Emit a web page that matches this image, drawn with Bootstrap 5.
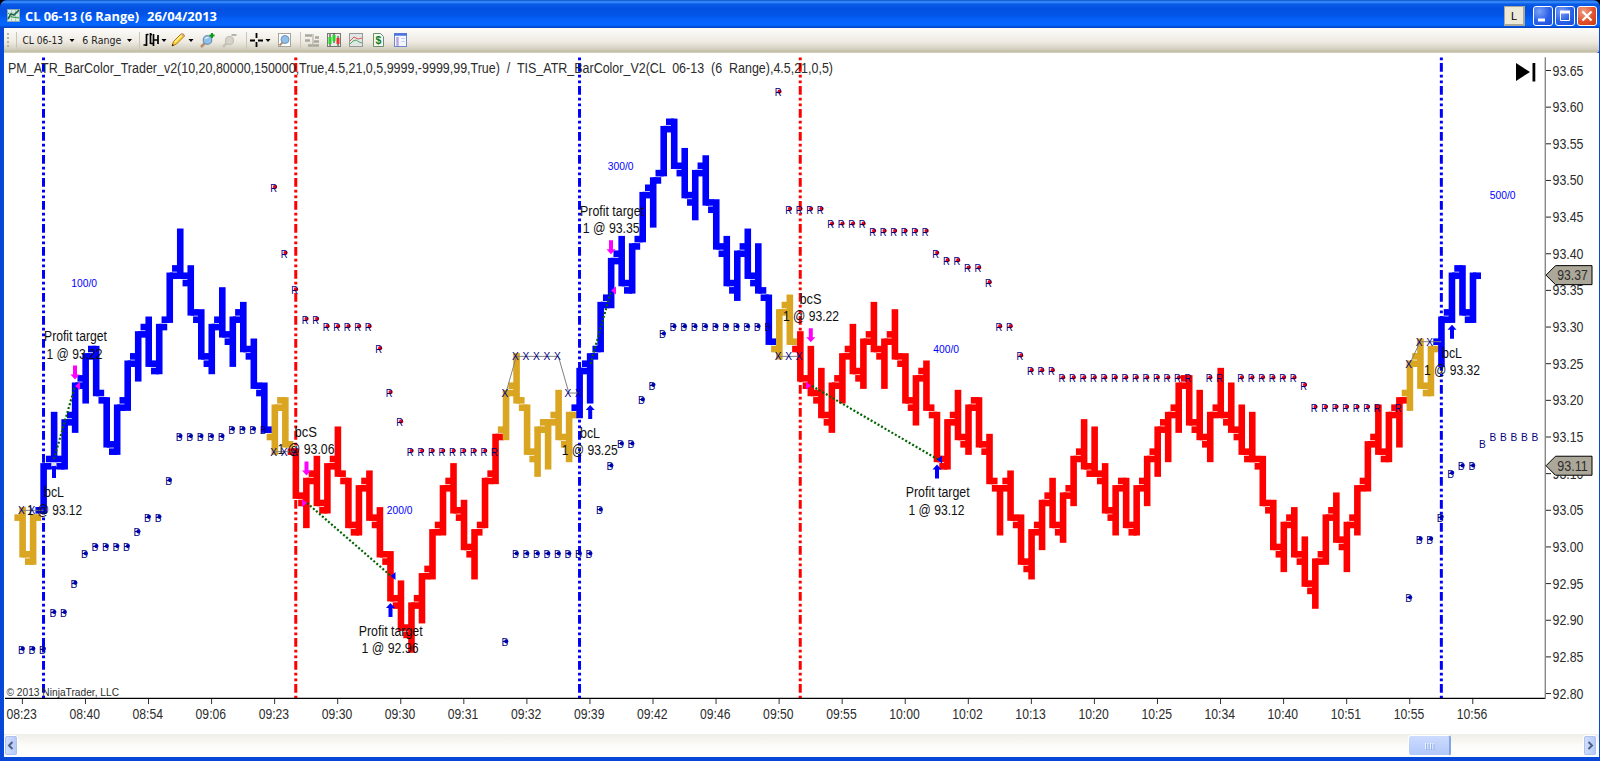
<!DOCTYPE html>
<html lang="en">
<head>
  <meta charset="UTF-8">
  <meta name="viewport" content="width=device-width, initial-scale=1">
  <title>CL 06-13 (6 Range) 26/04/2013</title>
  <link href="https://cdn.jsdelivr.net/npm/bootstrap@5.3.0/dist/css/bootstrap.min.css" rel="stylesheet">
  <style>
    body { background: #000; font-family: "Liberation Sans", sans-serif; color: #000; }
    .app-window { height: 761px; background: #0848d8; border-radius: 7px 7px 0 0; padding: 0 1px 4px 4px; }
    .title-bar { height: 28px; margin: 0 -1px 0 -4px; padding: 3px 3px 0 6px; border-radius: 7px 7px 0 0;
      background: linear-gradient(#0a50c8 0, #3c94ff 2px, #0a5be8 4px, #0350e0 9px, #0354e8 15px, #0562fb 20px, #0566ff 25px, #0140c0 28px); }
    .tool-bar { height: 25px; background: linear-gradient(#fcfcfa, #efebe3 55%, #d2cfbf 85%, #c0bda4 93%, #d8d5c2); border-radius: 0 0 3px 0; }
    .chart-area { background: #fff; height: 681px; }
    .scroll-bar { height: 23px; background: linear-gradient(#efeee8, #fcfcf8 50%, #fff); padding: 1px 2px 1px 0; }
    .scroll-btn { width: 14px; height: 21px; border: 1px solid #fff; outline: 1px solid #b0c2f2; outline-offset: -2px; border-radius: 3px; background: linear-gradient(90deg, #d3e0fd, #b4c8f8); }
    .scroll-thumb { width: 43px; height: 21px; margin-right: 132px; border: 1px solid #fff; border-right: 2px solid #86a4e0; border-radius: 3px; background: linear-gradient(#cddcfe, #bccffb 60%, #b2c8f8); }
    .win-buttons { gap: 2px; }
    .win-btn { width: 20px; height: 20px; border: 1px solid #fff; border-radius: 3px; background: radial-gradient(circle at 30% 25%, #7ba2f6, #2a60e8 55%, #1c4cd8); }
    .win-close { background: radial-gradient(circle at 30% 25%, #f0a088, #e2512b 55%, #c73c15); }
    .link-btn { width: 21px; height: 20px; margin-right: 6px; background: #ece9d8; border: 1px solid #aca899; border-width: 1px 2px 2px 1px; font-size: 11px; line-height: 18px; }
    svg { display: block; flex: none; }
    svg text { white-space: pre; }
  </style>
</head>
<body>
  <div class="app-window d-flex flex-column overflow-hidden">
    <div class="title-bar d-flex align-items-center justify-content-between">
      <svg width="230" height="24">
        <rect x="1.5" y="5.5" width="12" height="12" fill="#d9efe0" stroke="#8fa9b8"/>
        <path d="M2 9h11M2 13h11M5.500 6v11M9.500 6v11" stroke="#a4bcc4" stroke-width=".8"/>
        <path d="M2 15l3-5 3 1 5-5" fill="none" stroke="#226644" stroke-width="1.600"/>
        <path d="M2 9l4 4 7 1" fill="none" stroke="#38a048"/>
        <g font-family="Open Sans, sans-serif" font-weight="700" font-size="13">
          <text x="19" y="17" fill="#fff" textLength="114" lengthAdjust="spacingAndGlyphs">CL 06-13 (6 Range)</text>
          <text x="141" y="17" fill="#fff" textLength="70" lengthAdjust="spacingAndGlyphs">26/04/2013</text>
        </g>
      </svg>
      <div class="win-buttons d-flex align-items-center">
        <div class="link-btn text-center">L</div>
        <div class="win-btn"><svg width="18" height="18"><path d="M4 13h7" stroke="#fff" stroke-width="3"/></svg></div>
        <div class="win-btn"><svg width="18" height="18"><path d="M4.500 4.500h9v9h-9z" fill="none" stroke="#fff"/><path d="M4 5h10" stroke="#fff" stroke-width="3"/></svg></div>
        <div class="win-btn win-close"><svg width="18" height="18"><path d="M4.500 4.500l9 9M13.500 4.500l-9 9" stroke="#fff" stroke-width="2.300"/></svg></div>
      </div>
    </div>

    <div class="tool-bar d-flex">
      <!-- grip and separator -->
      <svg width="18" height="24"><path d="M4 5v16" stroke="#b5b29e" stroke-width="2" stroke-dasharray="2 2"/><path d="M12.500 4v17" stroke="#c9c6b6"/></svg>
      <svg width="45" height="24"><text x=".5" y="16" font-family="DejaVu Sans Condensed" font-size="11" fill="#222" textLength="40.500" lengthAdjust="spacingAndGlyphs">CL 06-13</text></svg>
      <svg width="15" height="24"><path d="M2.500 11h5l-2.500 3z"/></svg>
      <svg width="43" height="24"><text x=".3" y="16" font-family="DejaVu Sans Condensed" font-size="11" fill="#222" textLength="39" lengthAdjust="spacingAndGlyphs">6 Range</text></svg>
      <svg width="17" height="24"><path d="M2 11h5l-2.500 3z"/><path d="M14.500 4v17" stroke="#c9c6b6"/></svg>
      <!-- bar style -->
      <svg width="18" height="24"><path d="M4.500 6v12M8.500 5v11M11.500 6v12M16 7v9M1.500 17h3M4.500 6.500h2M8.500 6.500h1.500M8.500 15.500h3M11.500 12h5" fill="none" stroke="#000" stroke-width="1.700"/></svg>
      <svg width="10" height="24"><path d="M1.500 11h5l-2.500 3z"/></svg>
      <!-- drawing pencil -->
      <svg width="16" height="24"><path d="M2 18l1.500-4.500L11 6q3-1 3.500 2L6.500 16z" fill="#ffd02a" stroke="#a66d14" stroke-width=".9"/><path d="M5 14l7-7" stroke="#fff3a0" stroke-width="1.300"/><path d="M10.500 6l3 3 1-1.500-2.200-2z" fill="#d8a080"/><path d="M2 18l.7-2 1.300 1.300z"/></svg>
      <svg width="13" height="24"><path d="M2.500 11h5l-2.500 3z"/></svg>
      <!-- zoom in / zoom out -->
      <svg width="22" height="24"><path d="M2 19l4-4" stroke="#b98d6c" stroke-width="2.500"/><circle cx="8.500" cy="12" r="4.300" fill="#8fc0ea" stroke="#6e93b8" stroke-width="1.200"/><path d="M6.500 11q1-2 3-1.500" stroke="#e4f4ff" fill="none" stroke-width="1.300"/><path d="M10.500 7.500h5M13 5v5" stroke="#0a9a18" stroke-width="1.900"/></svg>
      <svg width="21" height="24"><path d="M2 19l4-4" stroke="#c6c3b6" stroke-width="2.500"/><circle cx="8.500" cy="12.500" r="4" fill="#d6d4ca" stroke="#c0beb4" stroke-width="1.200"/><path d="M10.500 7h5" stroke="#b5b3a8" stroke-width="2"/></svg>
      <svg width="7" height="24"><path d="M4.500 4v17" stroke="#c9c6b6"/></svg>
      <!-- crosshair -->
      <svg width="14" height="24"><path d="M1 12.500h5M9 12.500h5M7.500 5v5M7.500 14v5" stroke="#000" stroke-width="1.800"/></svg>
      <svg width="14" height="24"><path d="M2.500 11h5l-2.500 3z"/></svg>
      <svg width="19" height="24"><rect x="1.500" y="5.500" width="12" height="13" fill="#fff" stroke="#a5a59c"/><path d="M2.500 17.500l3-3" stroke="#b98d6c" stroke-width="2"/><circle cx="8" cy="11.500" r="4" fill="#8fc0ea" stroke="#6e93b8"/></svg>
      <svg width="8" height="24"><path d="M4.500 4v17" stroke="#c9c6b6"/></svg>
      <!-- order panel, disabled -->
      <svg width="22" height="24"><path d="M1 7.500h7M1 12.500h5M4 17.500h7M11 9.500h4M10 13.500h5M11 17.500h4" stroke="#aaa89d" stroke-width="2.500"/><path d="M9 6v12" stroke="#b8b6ab" stroke-width="1.300"/></svg>
      <svg width="22" height="24"><rect x="1.500" y="5.500" width="13" height="13" fill="#e4efe4" stroke="#777"/><path d="M4 6v12M8 5v10M12 8v10" stroke="#333"/><path d="M2.500 9h3v7h-3zM6.500 7h3v6h-3z" fill="#28d428"/><path d="M10.500 10h3v6h-3z" fill="#f03030"/></svg>
      <svg width="23" height="24"><rect x="1.500" y="5.500" width="13" height="13" fill="#dfe6e4" stroke="#999"/><path d="M2 13l4-4 4 2 4-1" fill="none" stroke="#e05858"/><path d="M2 16l3-3 3-1 3 2 3 1" fill="none" stroke="#58a868"/></svg>
      <svg width="22" height="24"><path d="M2.500 5.500h7l3 3v10h-10z" fill="#f2f8f0" stroke="#6f8d70"/><text x="4.500" y="16" font-size="10.500" font-weight="700" fill="#0a7d1a">$</text></svg>
      <svg width="17" height="24"><rect x="1.500" y="5.500" width="12" height="13" fill="#f4f7ff" stroke="#7088c8"/><path d="M1 6.500h13" stroke="#4c74e0" stroke-width="2.500"/><path d="M4.500 9v9" stroke="#b8a8e0" stroke-width="2.500"/><path d="M8 10.500h4M8 13.500h4" stroke="#c9d2e8"/></svg>
    </div>

    <div class="chart-area">
      <svg id="chart" width="1595" height="681" viewBox="4 53 1595 681" font-family="Liberation Sans, sans-serif"></svg>
    </div>

    <div class="scroll-bar d-flex justify-content-between">
      <div class="scroll-btn"><svg width="12" height="19"><path d="M7.500 6l-3.500 3.500 3.500 3.500" fill="none" stroke="#4d6185" stroke-width="2"/></svg></div>
      <div class="d-flex">
        <div class="scroll-thumb"><svg width="40" height="19"><path d="M16.500 7v6M19 7v6M21.500 7v6M24 7v6" stroke="#eef4fe"/><path d="M17.500 8v6M20 8v6M22.500 8v6M25 8v6" stroke="#8caae6" stroke-width=".8"/></svg></div>
        <div class="scroll-btn"><svg width="12" height="19"><path d="M4.500 6l3.500 3.500-3.500 3.500" fill="none" stroke="#4d6185" stroke-width="2"/></svg></div>
      </div>
    </div>
  </div>

  <script src="https://cdn.jsdelivr.net/npm/bootstrap@5.3.0/dist/js/bootstrap.bundle.min.js"></script>
  <script>
    const chart = document.getElementById('chart');
    const out = [];

    // prices are kept in ticks of 0.01 above 93.00
    const px = i => 22.4 + 10.51 * i;
    const py = t => 70.5 + (65 - t) * 7.33;

    function line(x1, y1, x2, y2, color, extra = '') {
      out.push(`<line x1="${x1}" y1="${y1}" x2="${x2}" y2="${y2}" stroke="${color}" ${extra}/>`);
    }

    function label(txt, x, y, width, size = 14, color = '#2c2c2c') {
      out.push(`<text x="${x}" y="${y}" font-size="${size}" fill="${color}" textLength="${width}" lengthAdjust="spacingAndGlyphs">${txt}</text>`);
    }

    // high of each 6-tick range bar and the side it closed on
    const bars = ('5D 4U 11U 18D 17U 22U 26U 27D 20D 19U 25U 29U 31D 30U 37U 43D 38D 32D 30U 35D 31U 33D 28D 22D ' +
      '19U 20D 13D 9U 12D 11U 16D 9D 8U 10D 5D -1D -5D -8U -4U 2U 8U 11D 6D 2U 9U 15U ' +
      '21U 26D 19D 16U 17U 21D 18U 24U 26U 33U 39U 42D 41U 48U 50U 57U 58D 54D 51U 53D 47D 42D 40U 43D 41D 34D ' +
      '32U 34D 29D 27D 24D 22U 26U 30D 28U 33D 28U 32D 26D 23U 25D 18D 17U 21D 19U 20D 15D 8U 10D 4D 2U 6U 9D 7U ' +
      '12U 17D 16D 11D 8U 9D 8U 12U 16U 18U 22U 23D 21D 18U 24D 22D 19D 18D 12D 6D 3U 5D 1D -2U 4U 7D 3U 8U 14U 19D 18U 20U ' +
      '25U 28D 27U 31U 37U 38D 37U').split(' ');

    function barColor(i) {
      if (i < 2 || (i >= 24 && i < 26) || (i >= 46 && i < 53) || (i >= 72 && i < 74) || (i >= 132 && i < 135)) return '#daa520';
      if ((i >= 26 && i < 46) || (i >= 74 && i < 132)) return '#f00';
      return '#00f';
    }

    // session lines
    const dash = 'stroke-width="3" stroke-dasharray="8.6 3 2.9 2.8 2.9 2.8" stroke-dashoffset="17.3"';
    [[2, '#00f'], [26, '#f00'], [53, '#00f'], [74, '#f00'], [135, '#00f']].forEach(([i, c]) => {
      line(px(i) + .1, 57.4, px(i) + .1, 698, c, dash);
    });

    let prev = 4;
    bars.forEach((b, i) => {
      const high = parseInt(b), low = high - 6, up = b.endsWith('U');
      const close = up ? high : low;
      const c = barColor(i), x = px(i) + .2;
      line(x, py(high) - 3.2, x, py(low) + 3.2, c, 'stroke-width="6.6"');
      line(x - 8.2, py(prev), x, py(prev), c, 'stroke-width="6.600"');
      line(x, py(close), x + 8, py(close), c, 'stroke-width="6.600"');
      prev = up ? close + 1 : close - 1;
    });

    // stop plots: [first bar, last bar, price]
    const longStops = [[0,2,-14],[3,4,-9],[5,5,-5],[6,6,-1],[7,10,0],[11,11,2],[12,13,4],[14,14,9],[15,19,15],[20,23,16],
      [46,46,-13],[47,54,-1],[55,55,5],[56,56,11],[57,58,14],[59,59,20],[60,60,22],[61,61,29],[62,71,30],
      [132,132,-7],[133,134,1],[135,135,4],[136,136,10],[137,138,11],[139,139,14],[140,144,15]];
    const shortStops = [[24,24,49],[25,25,40],[26,26,35],[27,28,31],[29,33,30],[34,34,27],[35,35,21],[36,36,17],[37,45,13],
      [72,72,62],[73,76,46],[77,80,44],[81,86,43],[87,87,40],[88,89,39],[90,91,38],[92,92,36],[93,94,30],[95,95,26],[96,98,24],
      [99,111,23],[113,114,23],[116,121,23],[122,122,22],[123,129,19],[131,131,19]];
    const flats = [[0,1,5],[24,26,13],[46,46,21],[47,51,26],[52,53,21],[72,74,26],[132,132,25],[133,134,28]];

    function plot(list, letter, dot) {
      list.forEach(([a, z, t]) => {
        for (let i = a; i <= z; i++) {
          if (dot && i < 139) out.push(`<circle cx="${px(i) + .4}" cy="${py(t) - .9}" r="2.1" fill="${dot}"/>`);
          label(letter, px(i) - 4.4, py(t) + 4, 6.8, 10.6, '#000080');
        }
      });
    }

    [[[0,5],[2,5]], [[24,13],[26,13]], [[46,21],[47,26],[51,26],[52,21],[53,21]], [[72,26],[74,26]], [[132,25],[133,28],[135,28]]].forEach(p => {
      out.push(`<polyline points="${p.map(q => px(q[0]) + ',' + py(q[1])).join(' ')}" fill="none" stroke="#808080"/>`);
    });
    plot(flats, 'X');
    plot(longStops, 'B', '#0000d0');
    plot(shortStops, 'R', '#f00');

    // trades
    const dots = 'stroke-width="2.2" stroke-dasharray="2 2"';
    line(54, 459, 75, 386, '#006400', dots);
    line(307, 503, 391, 576, '#006400', dots);
    line(590.5, 364, 611, 291, '#006400', dots);
    line(812, 386, 938, 459.5, '#006400', dots);

    function arrow(x, y, dir, color) {
      out.push(`<path d="M${x - 2} ${y}v${9 * dir}h-2.500l4.500 ${5 * dir} 4.500 ${-5 * dir}h-2.500v${-9 * dir}z" fill="${color}"/>`);
    }
    [[75, 365.5], [306.5, 461.5], [611, 240.3], [810.8, 328.3]].forEach(([x, y]) => arrow(x, y, 1, '#f0f'));
    [[54, 478], [390.5, 617], [590.2, 419], [937, 478.5], [1452, 338.7]].forEach(([x, y]) => arrow(x, y, -1, '#00f'));

    function wedge(x, y, dir, color) {
      out.push(`<path d="M${x} ${y}l${5 * dir} -4v8z" fill="${color}"/>`);
    }
    wedge(75, 386, 1, '#f0f');
    wedge(307, 503, -1, '#f0f');
    wedge(390.5, 576, 1, '#00f');
    wedge(611, 290.5, 1, '#f0f');
    wedge(811, 385.7, -1, '#f0f');
    wedge(937, 459.5, 1, '#00f');
    out.push('<rect x="51.500" y="462.500" width="4" height="3.500" fill="#dde"/>');

    [['Profit target', 44, 341, 63], ['1 @ 93.22', 46.5, 358.7, 56], ['bcL', 44, 497, 20], ['1 @ 93.12', 27, 514.7, 55],
     ['bcS', 294.5, 436.7, 22.5], ['1 @ 93.06', 277.5, 454, 57], ['Profit target', 358.7, 635.5, 64], ['1 @ 92.96', 361.5, 653, 57],
     ['Profit target', 580, 215.7, 64], ['1 @ 93.35', 582.7, 233, 57], ['bcL', 580, 438, 20], ['1 @ 93.25', 561.7, 455, 56],
     ['bcS', 799.5, 303.7, 22], ['1 @ 93.22', 783, 321, 56], ['Profit target', 905.7, 497, 64], ['1 @ 93.12', 908.5, 514.7, 56],
     ['bcL', 1442, 357.7, 20], ['1 @ 93.32', 1424, 375, 56]].forEach(a => label(...a, 14, '#111'));

    [['100/0', 71.3, 286.7], ['200/0', 386.7, 514], ['300/0', 607.7, 170], ['400/0', 933.3, 352.7], ['500/0', 1489.7, 198.7]]
      .forEach(([t, x, y]) => label(t, x, y, 25.8, 10, '#00f'));

    label('PM_ATR_BarColor_Trader_v2(10,20,80000,150000,True,4.5,21,0,5,9999,-9999,99,True)  /  TIS_ATR_BarColor_V2(CL  06-13  (6  Range),4.5,21,0,5)', 8, 73, 825, 14);
    label('© 2013 NinjaTrader, LLC', 6.5, 696, 112.5, 11);
    out.push('<path d="M1516 63v18l14-9zM1532.500 63h2.800v18.500h-2.800z"/>');

    // axes
    line(5, 698.3, 1545.5, 698.3, '#000', 'stroke-width="1.200"');
    line(1545.3, 57.3, 1545.3, 698.5, '#888', 'stroke-width="1.400"');
    for (let t = 65; t >= -20; t -= 5) {
      line(1546, py(t), 1551, py(t), '#222');
      label((93 + t / 100).toFixed(2), 1552.5, py(t) + 5, 31);
    }
    ['08:23', '08:40', '08:54', '09:06', '09:23', '09:30', '09:30', '09:31', '09:32', '09:39', '09:42', '09:46', '09:50', '09:55', '10:00', '10:02',
     '10:13', '10:20', '10:25', '10:34', '10:40', '10:51', '10:55', '10:56'].forEach((t, k) => {
      // one label every 6 bars
      const x = px(k * 6);
      line(x, 699, x, 704, '#333');
      label(t, x - 16, 719, 30.5);
    });

    [[37, '93.37'], [11, '93.11']].forEach(([t, txt]) => {
      const y = py(t) - .6;
      out.push(`<path d="M1546 ${y}l9.500 -9.500h36.500v19h-36.500z" fill="#aca899" stroke="#000"/>`);
      label(txt, 1557.3, y + 5.3, 30.5);
    });

    chart.innerHTML = out.join('');
  </script>
</body>
</html>
